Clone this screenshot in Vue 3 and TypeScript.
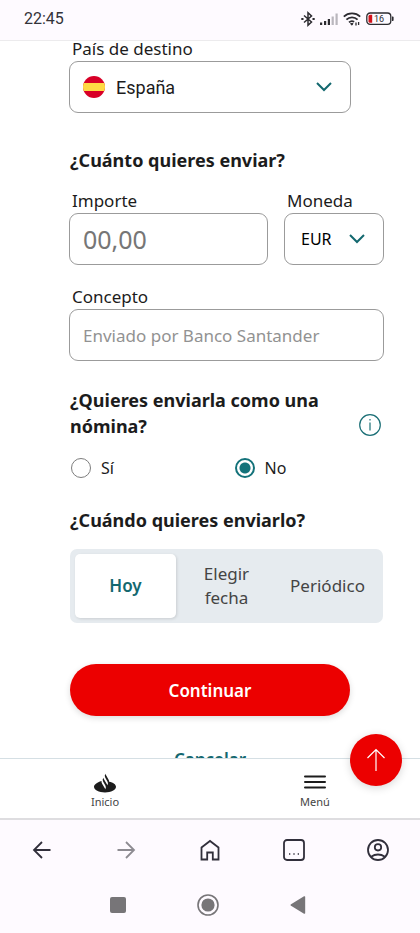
<script setup lang="ts">
import { ref } from 'vue'

const country = ref('España')
const currency = ref('EUR')
const amount = ref('')
const concept = ref('')
const payroll = ref('No')
const when = ref('Hoy')

const payrollOptions: string[] = ['Sí', 'No']
const whenOptions: string[] = ['Hoy', 'Elegir fecha', 'Periódico']
</script>

<template>
  <div class="screen">
    <header class="status">
      <span>22:45</span>
      <div class="status-icons">
        <svg width="14" height="16" viewBox="0 0 14 16" fill="none" stroke="#2c2b30" stroke-width="1.5">
          <path d="M3 4.5 10.5 11 7 14.2V1.8L10.5 5 3 11.5" />
          <path d="M.3 8h2.2M11.5 8h2.2" stroke-width="2" />
        </svg>
        <svg width="18" height="12" viewBox="0 0 18 12">
          <path d="M0 9.500h2.200V12H0zM4 8h2.200v4H4zM7.800 6H10v6H7.800z" fill="#2c2b30" />
          <path d="M11.600 3.400h2.200V12h-2.200zM15.500.5h2.200V12h-2.200z" fill="#b9b6bd" />
        </svg>
        <svg width="18" height="14" viewBox="0 0 18 14" fill="none" stroke="#2c2b30" stroke-width="1.8">
          <path d="M.8 4.600a12 12 0 0 1 16.400 0M3.400 7.600a8 8 0 0 1 11.200 0M6 10.300a4.500 4.500 0 0 1 5.200-.6" />
          <path d="M7.600 11.600h2.400L8.800 13.200z" fill="#2c2b30" stroke-width="1" />
          <path d="M13 13.500V10.500M15.600 10V13" stroke-width="1.300" />
        </svg>
        <svg width="28" height="14" viewBox="0 0 28 14">
          <rect x=".8" y="1" width="24" height="11.400" rx="3.400" fill="none" stroke="#2c2b30" stroke-width="1.300" />
          <path d="M26 4.500h.6q1 0 1 1v2.600q0 1-1 1H26z" fill="#2c2b30" />
          <path d="M4 2.700h2.200v8H4q-1.500 0-1.500-1.500v-5Q2.500 2.700 4 2.700z" fill="#d3141c" />
          <text x="13" y="10" text-anchor="middle" class="battery">16</text>
        </svg>
      </div>
    </header>

    <main class="content">
      <form class="form" @submit.prevent>
        <div class="field narrow">
          <label for="country">País de destino</label>
          <div class="box country">
            <svg width="22" height="22" viewBox="0 0 22 22">
              <clipPath id="flag"><circle cx="11" cy="11" r="11" /></clipPath>
              <g clip-path="url(#flag)">
                <path d="M0 0h22v22H0z" fill="#d80027" />
                <path d="M0 7h22v8H0z" fill="#ffda44" />
              </g>
            </svg>
            <select id="country" v-model="country">
              <option>España</option>
            </select>
            <svg class="chevron" width="16" height="10" viewBox="0 0 16 10"><path d="M1 1l7 7 7-7" /></svg>
          </div>
        </div>

        <h2>¿Cuánto quieres enviar?</h2>

        <div class="amounts">
          <div class="field">
            <label for="amount">Importe</label>
            <input id="amount" v-model="amount" class="box amount" inputmode="decimal" placeholder="00,00">
          </div>
          <div class="field">
            <label for="currency">Moneda</label>
            <div class="box currency">
              <select id="currency" v-model="currency">
                <option>EUR</option>
              </select>
              <svg class="chevron" width="16" height="10" viewBox="0 0 16 10"><path d="M1 1l7 7 7-7" /></svg>
            </div>
          </div>
        </div>

        <div class="field concept-field">
          <label for="concept">Concepto</label>
          <input id="concept" v-model="concept" class="box concept" placeholder="Enviado por Banco Santander">
        </div>

        <div class="question">
          <h2 id="payroll-title">¿Quieres enviarla como una nómina?</h2>
          <button type="button" class="info">
            <svg width="22" height="22" viewBox="0 0 22 22" fill="none" stroke="#1b6f76" stroke-width="1.200">
              <circle cx="11" cy="11" r="10.300" />
              <path d="M11 8.500v8M11 5v1.600" />
            </svg>
          </button>
        </div>

        <div class="radios" role="radiogroup" aria-labelledby="payroll-title">
          <label v-for="option in payrollOptions" :key="option">
            <input v-model="payroll" type="radio" name="payroll" :value="option">
            <span>{{ option }}</span>
          </label>
        </div>

        <h2 class="when-title">¿Cuándo quieres enviarlo?</h2>

        <div class="segments">
          <button
            v-for="option in whenOptions"
            :key="option"
            type="button"
            :class="{ active: when === option }"
            @click="when = option"
          >
            {{ option }}
          </button>
        </div>

        <button type="submit" class="primary">Continuar</button>
        <button type="button" class="cancel">Cancelar</button>
      </form>
    </main>

    <nav class="tabs">
      <a href="#inicio">
        <svg width="22" height="20" viewBox="0 1.500 24 21.500">
          <path
            fill="#1c1c1c"
            d="M16.534 10.844a5.181 5.181 0 0 0-.733-2.442l-2.921-5.052a4.216 4.216 0 0 1-.442-1.108l-.122.210a4.062 4.062 0 0 0 0 4.062l2.337 4.048a4.062 4.062 0 0 1 0 4.062l-.122.210a4.216 4.216 0 0 0-.442-1.108l-2.136-3.696-1.366-2.361a4.216 4.216 0 0 1-.442-1.108l-.122.210a4.062 4.062 0 0 0 0 4.061l2.340 4.048a4.062 4.062 0 0 1 0 4.062l-.122.210a4.216 4.216 0 0 0-.442-1.108l-2.920-5.054a5.126 5.126 0 0 1-.688-3.027C3 11.700 0 13.800 0 16.400c0 3.400 5.373 6.200 12 6.200s12-2.800 12-6.200c0-2.600-3-4.800-7.466-5.556z"
          />
        </svg>
        Inicio
      </a>
      <a href="#menu">
        <svg width="22" height="20" viewBox="0 0 22 20" stroke="#1c1c1c" stroke-width="2" stroke-linecap="round">
          <path d="M1 3.500h20M1 9h20M1 14.500h20" />
        </svg>
        Menú
      </a>
      <button type="button" class="to-top">
        <svg width="20" height="24" viewBox="0 0 20 24" fill="none" stroke="#fff" stroke-width="1.200">
          <path d="M10 23V1.500M1.500 10 10 1.500l8.500 8.500" />
        </svg>
      </button>
    </nav>

    <footer class="chrome">
      <div class="browser">
        <button type="button">
          <svg viewBox="0 0 24 24"><path d="M20.500 12H4M12 4l-8 8 8 8" /></svg>
        </button>
        <button type="button" class="faded">
          <svg viewBox="0 0 24 24"><path d="M3.500 12H20M12 4l8 8-8 8" /></svg>
        </button>
        <button type="button">
          <svg viewBox="0 0 24 24"><path d="M3.500 21.500V9.500L12 3l8.500 6.500v12h-5.700v-7H9.200v7z" /></svg>
        </button>
        <button type="button">
          <svg viewBox="0 0 24 24">
            <rect x="2" y="2" width="20" height="20" rx="3" />
            <path d="M7 16h1.300M11.350 16h1.300M15.700 16H17" stroke-width="1.400" />
          </svg>
        </button>
        <button type="button">
          <svg viewBox="0 0 24 24">
            <circle cx="12" cy="12" r="10" />
            <circle cx="12" cy="9.300" r="3.200" />
            <path d="M5 18.800q7-4.600 14 0" />
          </svg>
        </button>
      </div>
      <div class="system">
        <svg viewBox="0 0 24 24"><rect x="4" y="4" width="16" height="16" rx="2" fill="#777578" /></svg>
        <svg viewBox="0 0 24 24">
          <circle cx="12" cy="12" r="10" fill="none" stroke="#777578" stroke-width="1.600" />
          <circle cx="12" cy="12" r="6.600" fill="#777578" />
        </svg>
        <svg viewBox="0 0 24 24"><path d="M5 11.200 18 3.300q1.200-.5 1.200.6v16.200q0 1.100-1.200.6L5 12.800q-1.200-.8 0-1.600z" fill="#777578" /></svg>
      </div>
    </footer>
  </div>
</template>

<style>
body {
  background: #fff;
}
</style>

<style scoped>
.screen {
  display: flex;
  flex-direction: column;
  height: 100vh;
  overflow: hidden;
  color: #1c1c1c;
  font-family: "Noto Sans", sans-serif;
  font-size: 17px;
}

button,
input,
select {
  box-sizing: border-box;
  margin: 0;
  padding: 0;
  border: 0;
  background: none;
  color: inherit;
  font: inherit;
}

svg {
  display: block;
  flex: none;
}

.status {
  box-sizing: border-box;
  display: flex;
  flex: none;
  align-items: center;
  justify-content: space-between;
  height: 41px;
  padding: 0 26px 2px 24px;
  border-bottom: 1px solid #ecebed;
  background: #fefaff;
  color: #333238;
  font: 16px/20px Roboto, sans-serif;
}

.status-icons {
  display: flex;
  align-items: center;
  gap: 5px;
}

.battery {
  fill: #2c2b30;
  font: 9px Roboto, sans-serif;
}

.content {
  flex: 1;
  min-height: 0;
}

.form {
  display: flex;
  flex-direction: column;
  padding: 0 36px 0 69px;
}

.field {
  display: flex;
  flex-direction: column;
  gap: 5px;
}

.field label {
  padding-left: 3px;
  line-height: 15px;
}

.narrow {
  margin-right: 33px;
}

.box {
  box-sizing: border-box;
  display: flex;
  align-items: center;
  width: 100%;
  height: 52px;
  border: 1px solid #9b9b9b;
  border-radius: 9px;
}

.box select {
  flex: 1;
  min-width: 0;
  height: 100%;
  appearance: none;
}

.country {
  gap: 11px;
  padding: 0 18px 0 13px;
  font-family: Roboto, sans-serif;
  font-size: 18px;
}

.currency {
  padding: 0 18px 0 16px;
  color: #000;
  font-size: 16px;
}

.chevron {
  fill: none;
  stroke: #13686f;
  stroke-width: 2;
}

h2 {
  margin: 34px 0 20px;
  padding-left: 1px;
  font-size: 18px;
  font-weight: 700;
  line-height: 26px;
}

.amounts {
  display: grid;
  grid-template-columns: 1fr 100px;
  gap: 16px;
}

.concept-field {
  margin-top: 24px;
}

input.box {
  padding: 0 13px;
}

.amount {
  font-size: 25px;
}

.amount::placeholder {
  color: #767676;
  opacity: 1;
}

.concept::placeholder {
  color: #929292;
  opacity: 1;
}

.question {
  display: flex;
  align-items: center;
  justify-content: space-between;
  margin: 26px 3px 19px 0;
}

.question h2 {
  max-width: 260px;
  margin: 0;
}

.info {
  padding-top: 23px;
}

.radios {
  display: grid;
  grid-template-columns: 1fr 1fr;
  gap: 12px;
  font-size: 16px;
}

.radios label {
  display: flex;
  align-items: center;
  gap: 10px;
  padding-left: 2px;
  line-height: 20px;
}

.radios input {
  width: 20px;
  height: 20px;
  border: 1px solid #7d7d7d;
  border-radius: 50%;
  appearance: none;
}

.radios input:checked {
  border: 2px solid #13727a;
  background: radial-gradient(circle, #13727a 5px, transparent 6px);
}

.when-title {
  margin: 29px 0 16px;
}

.segments {
  display: grid;
  grid-template-columns: repeat(3, 1fr);
  margin: 0 1px;
  padding: 5px;
  border-radius: 7px;
  background: #e6ebef;
}

.segments button {
  height: 64px;
  padding: 0 16px;
  border-radius: 5px;
  color: #444;
  line-height: 24px;
}

.segments button:last-child {
  padding: 0;
}

.segments .active {
  background: #fff;
  box-shadow: 1px 1px 3px rgba(0, 0, 0, 0.12);
  color: #13686f;
  font-weight: 600;
}

.primary {
  height: 52px;
  margin: 41px 34px 0 1px;
  border-radius: 26px;
  background: #ec0000;
  box-shadow: 0 2px 6px rgba(0, 0, 0, 0.14);
  color: #fff;
  font-weight: 600;
}

.cancel {
  height: 52px;
  margin: 17px 34px 0 1px;
  color: #13686f;
  font-weight: 600;
}

.tabs {
  position: relative;
  box-sizing: border-box;
  display: flex;
  flex: none;
  height: 60px;
  border-top: 1px solid #d5dfe4;
  background: #fff;
}

.tabs a {
  display: flex;
  flex: 1;
  flex-direction: column;
  align-items: center;
  gap: 2px;
  padding-top: 14px;
  color: #444;
  font-size: 11px;
  line-height: 14px;
  text-decoration: none;
}

.to-top {
  position: absolute;
  top: -25px;
  right: 18px;
  display: grid;
  place-items: center;
  width: 52px;
  height: 52px;
  border-radius: 50%;
  background: #ec0000;
  box-shadow: 0 2px 8px rgba(0, 0, 0, 0.16);
}

.chrome {
  flex: none;
  border-top: 2px solid #dedde0;
  background: #fefaff;
}

.browser {
  display: grid;
  grid-template-columns: repeat(5, 1fr);
  height: 60px;
}

.browser button {
  display: grid;
  place-items: center;
}

.browser svg {
  width: 24px;
  height: 24px;
  fill: none;
  stroke: #312f3b;
  stroke-width: 1.8px;
}

.browser .faded svg {
  stroke: #8d8b91;
}

.system {
  display: flex;
  justify-content: center;
  gap: 66px;
  padding: 13px 4px 16px 0;
}

.system svg {
  width: 24px;
  height: 24px;
}
</style>
